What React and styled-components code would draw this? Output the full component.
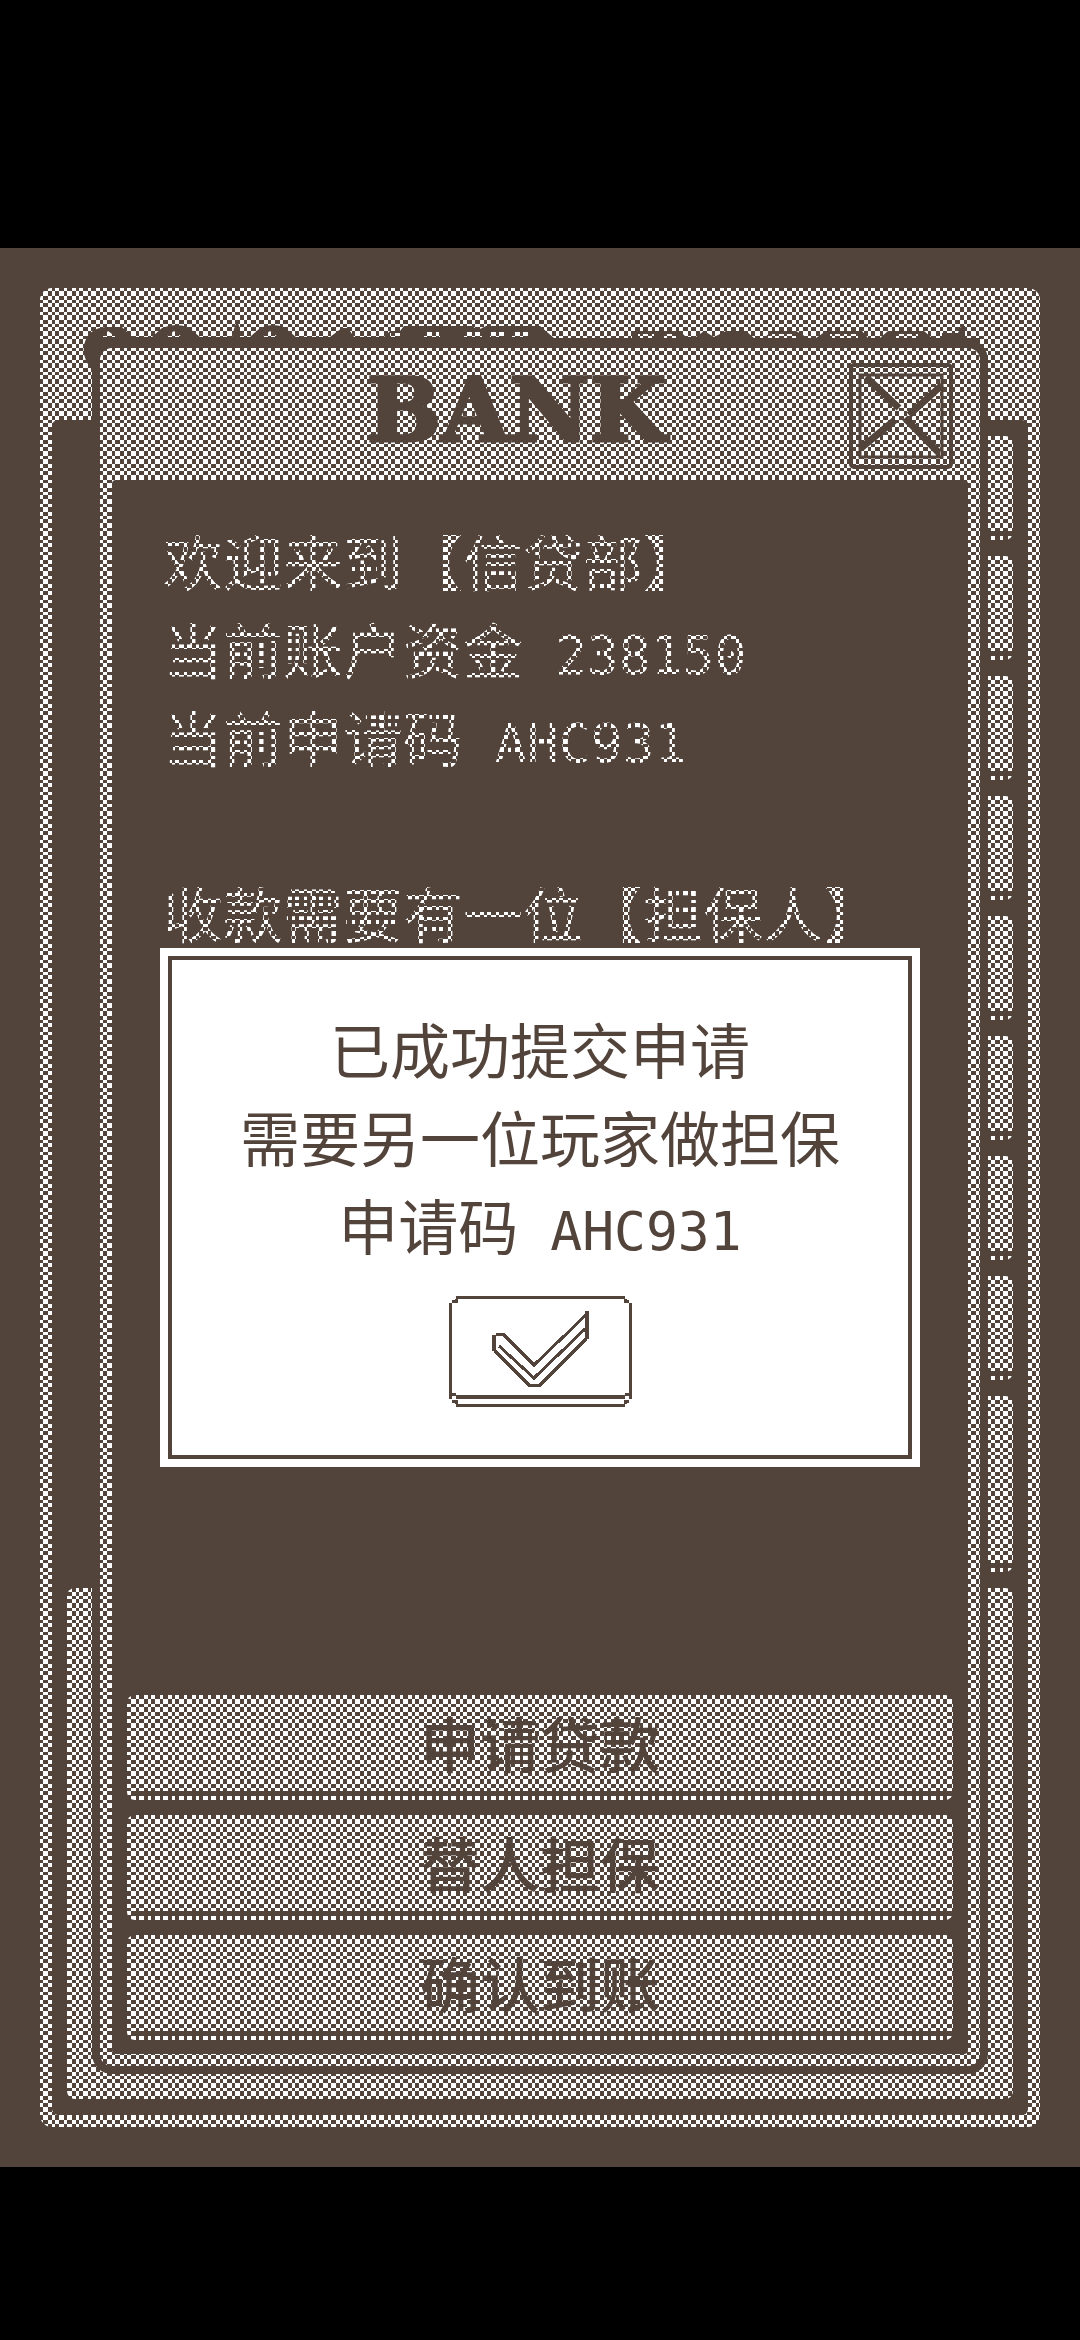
import React from "react";
import styled, { createGlobalStyle } from "styled-components";

const INK = "#52433b";
const PAPER = "#ffffff";

// dither tile, the runs are slightly uneven like a scaled-up pixel screen
const COLS = [0, 4, 7, 11, 16, 19, 24];
const ROWS = [0, 3, 8, 12, 15, 19, 24];

const buildTile = () => {
  let d = "";
  for (let y = 0; y < 6; y++) {
    for (let x = 0; x < 6; x++) {
      if ((x + y) % 2 === 1) {
        const w = COLS[x + 1] - COLS[x];
        const h = ROWS[y + 1] - ROWS[y];
        d += `M${COLS[x]} ${ROWS[y]}h${w}v${h}h-${w}z`;
      }
    }
  }
  const svg = `<svg xmlns="http://www.w3.org/2000/svg" width="24" height="24" shape-rendering="crispEdges"><path fill="${INK}" d="${d}"/></svg>`;
  return `url("data:image/svg+xml,${encodeURIComponent(svg)}")`;
};

const TILE = buildTile();

const GlobalStyle = createGlobalStyle`
  * {
    box-sizing: border-box;
  }
  body {
    margin: 0;
    background: #000;
  }
  button {
    font: inherit;
    color: inherit;
    border: 0;
    padding: 0;
    cursor: pointer;
  }
`;

const Page = styled.div`
  display: flex;
  flex-direction: column;
  min-height: 100vh;
  padding: 248px 0 173px;
  background: #000;
  color: ${INK};
  font-family: "Noto Sans CJK SC", sans-serif;
  font-size: 60px;
  line-height: 88px;
`;

const Screen = styled.div`
  position: relative;
  flex: 1;
  display: grid;
  grid-template-columns: minmax(0, 1fr);
  background: ${INK};

  &::after {
    content: "";
    position: absolute;
    inset: 0;
    z-index: 1;
    pointer-events: none;
    background: ${TILE} 0 16px;
  }
`;

const Panel = styled.section`
  grid-area: 1 / 1;
  display: flex;
  flex-direction: column;
  padding: 0 12px 12px;
  margin: ${(p) => p.$margin};
  border-radius: 12px;
  background: ${PAPER};
  box-shadow: 0 0 0 8px ${INK};
`;

const BackHeader = styled.div`
  height: 132px;
  padding-top: 32px;
  margin: 0 -12px;
`;

const BackTitle = styled.svg`
  display: block;
  width: 100%;
  height: 56px;
  fill: ${INK};
`;

const BackBody = styled.div`
  flex: 1;
  display: flex;
  flex-direction: column;
  gap: 16px;
  padding: 16px 15px;
  border-radius: 6px;
  background: ${INK};
`;

const keyFace = `
  border-radius: 8px;
  background: linear-gradient(${INK}, ${INK}) 4px calc(100% - 4px) / 100% 5px
    no-repeat ${PAPER};
`;

const Slot = styled.div`
  height: ${(p) => (p.$tall ? 176 : 104)}px;
  margin-left: 40px;
  ${keyFace}
`;

const Tray = styled.div`
  flex: 1;
  border-radius: 8px;
  background: ${PAPER};
`;

const Header = styled.header`
  display: flex;
  align-items: center;
  height: 132px;
  padding: 4px 15px 0 72px;
`;

const Title = styled.h1`
  flex: 1;
  margin: 0;
  padding-bottom: 12px;
  font: bold 88px "DejaVu Serif", serif;
  line-height: 120px;
  text-align: center;
  -webkit-text-stroke: 3px ${INK};
`;

const CloseButton = styled.button`
  width: 104px;
  height: 106px;
  background: none;

  svg {
    display: block;
  }
`;

const Body = styled.div`
  flex: 1;
  display: flex;
  flex-direction: column;
  justify-content: space-between;
  padding: 36px 15px 14px;
  border-radius: 4px;
  background: ${INK};
`;

const Intro = styled.div`
  padding-left: 36px;
  color: ${PAPER};
`;

const Line = styled.p`
  min-height: 88px;
  margin: 0;
  white-space: pre;
`;

const Code = styled.span`
  font: 53px "DejaVu Sans Mono", monospace;
  line-height: 60px;
`;

const Actions = styled.div`
  display: flex;
  flex-direction: column;
  gap: 15px;
`;

const ActionButton = styled.button`
  height: 105px;
  padding-bottom: 12px;
  font-weight: 500;
  line-height: 88px;
  ${keyFace}
`;

const Popup = styled.div`
  grid-area: 1 / 1;
  z-index: 2;
  align-self: start;
  margin: 708px 168px 0;
  padding: 44px 0 48px;
  border: 4px solid ${INK};
  background: ${PAPER};
  box-shadow: 0 0 0 8px ${PAPER};
  text-align: center;
`;

const ConfirmButton = styled.button`
  display: block;
  width: 183px;
  height: 111px;
  margin: 28px auto 0;
  background: none;

  svg {
    display: block;
  }
`;

const PixelText = ({ children, code }) => (
  <Line>
    {children}
    {code && <Code> {code}</Code>}
  </Line>
);

const CloseIcon = () => (
  <svg width="104" height="106" fill="none" stroke={INK}>
    <rect x="2" y="2" width="100" height="102" rx="3" strokeWidth="4" />
    <rect x="11" y="12" width="82" height="82" strokeWidth="3" />
    <path
      d="M17 14 50 45M56 55 90 90M93 22 60 52M46 57 12 85"
      strokeWidth="7"
    />
  </svg>
);

const ConfirmIcon = () => (
  <svg
    width="183"
    height="111"
    fill="none"
    stroke={INK}
    strokeWidth="3"
    shapeRendering="crispEdges"
  >
    <path d="M7 1.500H176M7 109.500H176M1.500 7V103M181.500 7V103" />
    <path d="M3 5H7V3M180 5H176V3M3 105H7V108M180 105H176V108M3 98H7M176 98H180" />
    <path d="M7 101H176" strokeWidth="4" />
    <path d="M45 39V55M138 15V43" strokeWidth="4" />
    <path d="M47 38H54L85 69L137 19M50 50L85 82L136 33M46 55L80 89H91L137 43" />
  </svg>
);

const ACTIONS = ["申请贷款", "替人担保", "确认到账"];

export default function App() {
  return (
    <>
      <GlobalStyle />
      <Page>
        <Screen>
          <Panel $margin="40px" aria-hidden="true">
            <BackHeader>
              <BackTitle viewBox="0 0 1000 56" preserveAspectRatio="none">
                <path d="M44 25Q48 8 66 7H82L92 17H112L122 8Q137 2 149 8L160 17H192L194 9L197 0L200 9V17H210L220 8Q234 2 245 8L256 17H290L302 8H308L314 17H344L350 11H360L364 6H432L438 10L446 6H500L514 18H592V11H640L646 17L656 17L664 11L674 17L686 11H706L714 18H724L732 11H756L768 18H776L786 11H822L828 18H840L848 11H884L892 18H902V13H918L921 6H925V18H940V24H60V50H52Q42 38 44 25Z" />
                <path
                  fill={PAPER}
                  d="M62 17 68 11 76 17ZM126 17 134 11 142 17ZM222 17 230 11 238 17ZM350 13H360V17H350ZM384 12H400V17H384ZM424 12H442V17H424ZM450 12H464V17H450ZM472 12H488V17H472ZM598 14H614V18H598ZM624 14H636V18H624ZM728 14H756V18H728ZM790 14H818V18H790ZM856 14H878V18H856Z"
                />
              </BackTitle>
            </BackHeader>
            <BackBody>
              {[...Array(9)].map((x, i) => (
                <Slot key={i} $tall={i === 8} />
              ))}
              <Tray />
            </BackBody>
          </Panel>
          <Panel $margin="100px 100px 101px">
            <Header>
              <Title>BANK</Title>
              <CloseButton aria-label="关闭">
                <CloseIcon />
              </CloseButton>
            </Header>
            <Body>
              <Intro>
                <PixelText>欢迎来到【信贷部】</PixelText>
                <PixelText code="238150">当前账户资金</PixelText>
                <PixelText code="AHC931">当前申请码</PixelText>
                <PixelText />
                <PixelText>收款需要有一位【担保人】</PixelText>
              </Intro>
              <Actions>
                {ACTIONS.map((label) => (
                  <ActionButton key={label}>{label}</ActionButton>
                ))}
              </Actions>
            </Body>
          </Panel>
          <Popup role="dialog">
            <PixelText>已成功提交申请</PixelText>
            <PixelText>需要另一位玩家做担保</PixelText>
            <PixelText code="AHC931">申请码</PixelText>
            <ConfirmButton aria-label="确定">
              <ConfirmIcon />
            </ConfirmButton>
          </Popup>
        </Screen>
      </Page>
    </>
  );
}
